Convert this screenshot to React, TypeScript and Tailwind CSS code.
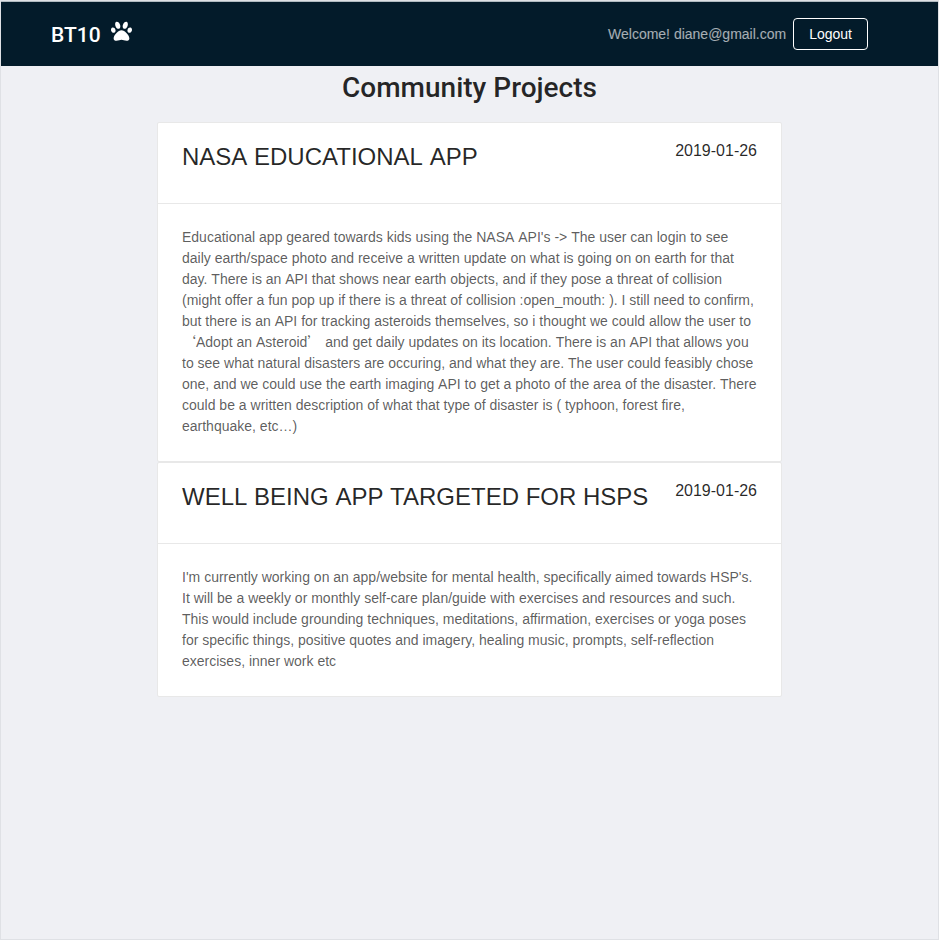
import { Fragment } from "react";

const projects = [
  {
    title: "NASA EDUCATIONAL APP",
    date: "2019-01-26",
    text: "Educational app geared towards kids using the NASA API's -> The user can login to see daily earth/space photo and receive a written update on what is going on on earth for that day. There is an API that shows near earth objects, and if they pose a threat of collision (might offer a fun pop up if there is a threat of collision :open_mouth: ). I still need to confirm, but there is an API for tracking asteroids themselves, so i thought we could allow the user to ‘Adopt an Asteroid’ and get daily updates on its location. There is an API that allows you to see what natural disasters are occuring, and what they are. The user could feasibly chose one, and we could use the earth imaging API to get a photo of the area of the disaster. There could be a written description of what that type of disaster is ( typhoon, forest fire, earthquake, etc…)",
  },
  {
    title: "WELL BEING APP TARGETED FOR HSPS",
    date: "2019-01-26",
    text: "I'm currently working on an app/website for mental health, specifically aimed towards HSP's. It will be a weekly or monthly self-care plan/guide with exercises and resources and such. This would include grounding techniques, meditations, affirmation, exercises or yoga poses for specific things, positive quotes and imagery, healing music, prompts, self-reflection exercises, inner work etc",
  },
];

// Each word is shaped alone, so no kerning is applied across spaces.
// Curly quotes are set full width.
function Words({ text }: { text: string }) {
  return text.split(" ").map((word, i) => (
    <Fragment key={i}>
      {i > 0 && " "}
      <span className="inline-block">
        {word.split(/([‘’])/).map((part, j) =>
          part === "‘" || part === "’" ? (
            <span key={j} className="font-['Noto_Sans_CJK_SC',sans-serif] leading-none">{part}</span>
          ) : (
            part
          ),
        )}
      </span>
    </Fragment>
  ));
}

function Paw() {
  return (
    <svg viewBox="0 0 512 512" className="mb-[5px] size-[21px] fill-white">
      <path d="M256 224c-79.41 0-192 122.76-192 200.25 0 34.9 26.81 55.75 71.74 55.75 48.84 0 81.09-25.08 120.26-25.08 39.51 0 71.85 25.08 120.26 25.08 44.93 0 71.74-20.85 71.74-55.75C448 346.76 335.41 224 256 224zm-147.28-12.61c-10.4-34.65-42.44-57.09-71.56-50.13-29.12 6.96-44.29 40.69-33.89 75.34 10.4 34.65 42.44 57.09 71.56 50.13 29.12-6.96 44.29-40.69 33.89-75.34zm84.72-20.78c30.94-8.14 42.93-53.17 26.78-100.58s-54.33-79.24-85.27-71.1-42.93 53.17-26.78 100.58 54.33 79.24 85.27 71.1zm281.39-29.34c-29.12-6.96-61.15 15.48-71.56 50.13-10.4 34.65 4.77 68.38 33.89 75.34 29.12 6.96 61.15-15.48 71.56-50.13 10.4-34.65-4.77-68.38-33.89-75.34zm-156.27 29.34c30.94 8.14 69.11-23.69 85.27-71.1s4.16-92.44-26.78-100.58-69.11 23.69-85.27 71.1-4.16 92.44 26.78 100.58z" />
    </svg>
  );
}

export default function App() {
  return (
    <div className="h-[940px] border border-[#dfe1e5] bg-[#eff0f4] font-['Liberation_Sans','Noto_Sans_CJK_SC',sans-serif] text-sm text-black/65">
      <header className="flex h-[65px] items-center justify-between border-t border-[#b0bac0] bg-[#031b2a] pr-[70px] pl-[50px]">
        <div className="flex items-center gap-[10px] font-['Roboto',sans-serif] text-[21px] font-medium text-white">
          <span className="pt-[2px]">BT10</span>
          <Paw />
        </div>
        <div className="flex h-[63px] items-center gap-[7px] text-white/65">
          <span>Welcome! diane@gmail.com</span>
          <button className="h-8 rounded border border-white px-[15px] text-white">Logout</button>
        </div>
      </header>
      <h1 className="pt-[3px] text-center font-['Roboto',sans-serif] text-[28px] leading-[38px] font-medium text-black/85">Community Projects</h1>
      <main className="mx-auto mt-[15px] w-[625px]">
        {projects.map((p) => (
          <article key={p.title} className="rounded-[2px] border border-[#e8e8e8] bg-white">
            <div className="flex h-[81px] justify-between border-b border-[#e8e8e8] px-6 pt-4 text-black/85">
              <h2 className="text-2xl leading-9"><Words text={p.title} /></h2>
              <span className="text-base">{p.date}</span>
            </div>
            <p className="px-6 pt-[23px] pb-6 leading-[21px]"><Words text={p.text} /></p>
          </article>
        ))}
      </main>
    </div>
  );
}
